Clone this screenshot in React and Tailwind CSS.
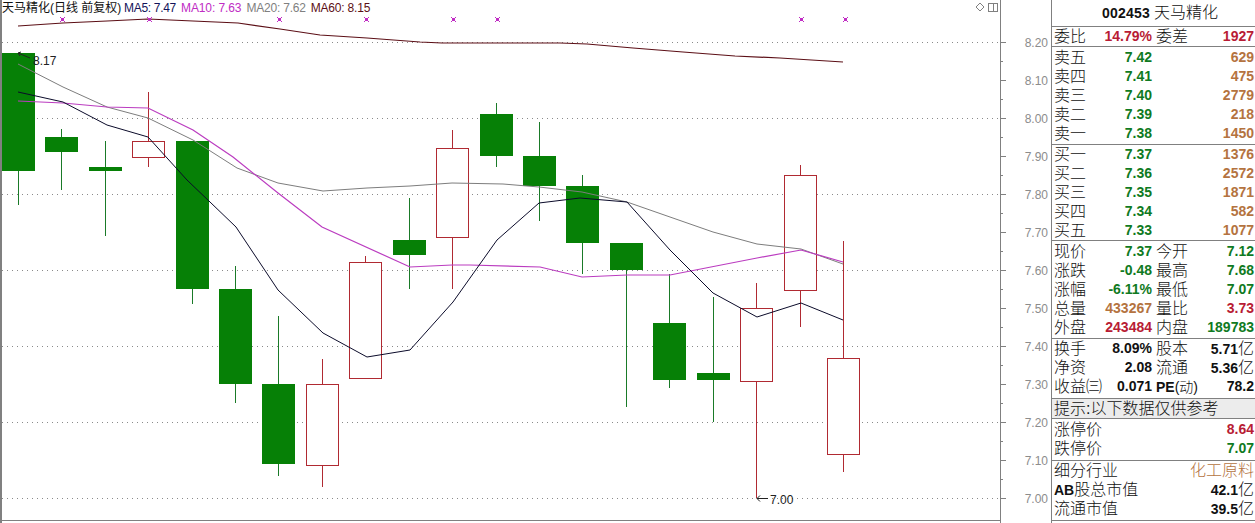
import React from "react";

const GREEN = "#0f7a22";
const RED = "#b81c34";
const BROWN = "#b4733f";

// [left, bodyTop, bodyBottom, wickTop, wickBottom, type]
const candles = [
  [2, 53, 171, 53, 205, "g"],
  [45, 137, 152, 129, 190, "g"],
  [89, 167, 171, 141, 236, "g"],
  [132, 141, 157, 92, 167, "r"],
  [176, 141, 289, 141, 304, "g"],
  [219, 289, 384, 266, 403, "g"],
  [262, 384, 464, 316, 476, "g"],
  [306, 384, 465, 359, 487, "r"],
  [349, 262, 378, 256, 378, "r"],
  [393, 240, 255, 198, 289, "g"],
  [436, 148, 237, 130, 289, "r"],
  [480, 114, 156, 103, 167, "g"],
  [523, 156, 186, 122, 221, "g"],
  [566, 186, 243, 175, 274, "g"],
  [610, 243, 270, 243, 407, "g"],
  [653, 323, 380, 274, 388, "g"],
  [697, 373, 380, 297, 422, "g"],
  [740, 308, 381, 283, 498, "r"],
  [784, 175, 290, 165, 327, "r"],
  [827, 358, 454, 241, 472, "r"],
];

const ma60 =
  "18,26 63,23 107,21 148,19 193,21 238,23 280,29 320,35 367,38 420,42 442,43 473,43 560,43 587,44 633,48 683,52 735,56 780,58 843,62";
const ma20 =
  "18,64 63,87 107,107 148,118 193,140 237,168 278,183 323,191 367,188 410,186 452,183 503,184 539,187 582,192 627,202 670,217 713,232 757,244 801,249 843,264";
const ma10 =
  "18,101 63,103 107,107 148,108 193,130 233,157 278,193 322,227 410,267 452,265 470,265 540,267 582,277 627,275 670,275 757,258 801,250 843,262";
const ma5 =
  "18,92 63,102 107,125 148,137 187,180 210,202 236,227 278,290 323,333 367,357 410,350 453,302 497,240 539,203 580,198 627,202 670,250 713,293 757,317 801,303 843,320";

const markers = [62, 149, 279, 366, 453, 497, 801, 845];
const dotted = [42, 118, 194, 270, 346, 422, 498];
const axis = ["8.20", "8.10", "8.00", "7.90", "7.80", "7.70", "7.60", "7.50", "7.40", "7.30", "7.20", "7.10", "7.00"];

const Chart = () => (
  <svg width="1051" height="523" className="block">
    {dotted.map((y) => (
      <line key={y} x1="2" x2="1000" y1={y + 0.5} y2={y + 0.5} stroke="#8a8a8a" strokeDasharray="1 4" />
    ))}

    {candles.map(([x, top, bottom, wickTop, wickBottom, type]) => {
      const color = type === "g" ? "#068006" : "#b02a32";
      const wick = type === "g" ? "#1a7a28" : "#b02a32";
      return (
        <g key={x} shapeRendering="crispEdges">
          <rect x={x + 16} y={wickTop} width="1" height={wickBottom - wickTop} fill={wick} />
          {type === "g" ? (
            <rect x={x} y={top} width="33" height={bottom - top} fill={color} />
          ) : (
            <rect x={x + 0.5} y={top + 0.5} width="32" height={bottom - top} fill="#fff" stroke={color} />
          )}
        </g>
      );
    })}

    <polyline points={ma60} fill="none" stroke="#5c0f16" strokeWidth="1.2" />
    <polyline points={ma20} fill="none" stroke="#7d7d7d" strokeWidth="1" />
    <polyline points={ma10} fill="none" stroke="#bb3cc0" strokeWidth="1.2" />
    <polyline points={ma5} fill="none" stroke="#0b0b2a" strokeWidth="1" />

    {markers.map((x) => (
      <path
        key={x}
        d={`M${x - 2} 17h1v1h-1zM${x + 2} 17h1v1h-1zM${x - 2} 21h1v1h-1zM${x + 2} 21h1v1h-1zM${x - 1} 18h3v3h-3z`}
        fill="#c02cc4"
        shapeRendering="crispEdges"
      />
    ))}

    {/* high and low price tags */}
    <path d="M30 58 18 53m3 -1 -3 1 2 3" fill="none" stroke="#222" />
    <text x="33" y="65" fontSize="12" fill="#222">8.17</text>
    <path d="M768 498.5H757m3 -3 -3 3 3 3" fill="none" stroke="#222" />
    <text x="770" y="504" fontSize="12" fill="#222">7.00</text>

    {/* layout toggle icons */}
    <path d="M980 3l4 4-4 4-4-4z" fill="none" stroke="#808080" />
    <path d="M988.500 3.500h9v8h-9zM993.500 3.500v8" fill="none" stroke="#808080" shapeRendering="crispEdges" />

    {/* price axis */}
    <g shapeRendering="crispEdges" fill="#808080">
      <rect x="0" y="0" width="2" height="523" />
      <rect x="0" y="520" width="1000" height="1" />
      <rect x="1000" y="0" width="1" height="523" />
      {axis.map((label, i) => (
        <g key={label}>
          <rect x="1000" y={42 + i * 38} width="6" height="1" />
          {i < 12 && <rect x="1000" y={61 + i * 38} width="3" height="1" />}
        </g>
      ))}
    </g>
    {axis.map((label, i) => (
      <text key={label} x="1048" y={47 + i * 38} fontSize="12" textAnchor="end" fill="#8c8c8c">
        {label}
      </text>
    ))}
  </svg>
);

const Num = ({ color = "#111", children }) => (
  <span className="text-[14px] font-bold" style={{ color }}>
    {children}
  </span>
);

const Row = ({ a, b, c, d, bColor, dColor }) => (
  <div className="grid grid-cols-[98px_1fr] h-[19px] leading-[19px] pl-[2px] pr-[2px] text-[16px] text-[#111] font-light whitespace-nowrap">
    <div className="flex justify-between">
      <span>{a}</span>
      <Num color={bColor}>{b}</Num>
    </div>
    <div className="flex justify-between pl-[4px]">
      <span>{c}</span>
      <Num color={dColor}>{d}</Num>
    </div>
  </div>
);

const Yi = ({ children }) => (
  <>
    {children}
    <span className="text-[16px] font-light">亿</span>
  </>
);

const Panel = () => (
  <div className="w-[204px] h-[523px] overflow-hidden flex flex-col text-[#111]">
    <div className="h-[27px] border-b border-[#808080] flex items-center justify-center gap-[4px] pl-[12px] text-[16px] font-light">
      <span className="text-[14px] font-bold tracking-[0.2px]">002453</span>
      <span>天马精化</span>
    </div>
    <div className="h-[20px] border-b border-[#808080]">
      <Row a="委比" b="14.79%" c="委差" d="1927" bColor={RED} dColor={RED} />
    </div>
    <div className="h-[98px] pt-[1px] border-b border-[#808080]">
      <Row a="卖五" b="7.42" d="629" bColor={GREEN} dColor={BROWN} />
      <Row a="卖四" b="7.41" d="475" bColor={GREEN} dColor={BROWN} />
      <Row a="卖三" b="7.40" d="2779" bColor={GREEN} dColor={BROWN} />
      <Row a="卖二" b="7.39" d="218" bColor={GREEN} dColor={BROWN} />
      <Row a="卖一" b="7.38" d="1450" bColor={GREEN} dColor={BROWN} />
    </div>
    <div className="h-[96px] border-b border-[#808080]">
      <Row a="买一" b="7.37" d="1376" bColor={GREEN} dColor={BROWN} />
      <Row a="买二" b="7.36" d="2572" bColor={GREEN} dColor={BROWN} />
      <Row a="买三" b="7.35" d="1871" bColor={GREEN} dColor={BROWN} />
      <Row a="买四" b="7.34" d="582" bColor={GREEN} dColor={BROWN} />
      <Row a="买五" b="7.33" d="1077" bColor={GREEN} dColor={BROWN} />
    </div>
    <div className="h-[98px] pt-[1px] border-b border-[#808080]">
      <Row a="现价" b="7.37" c="今开" d="7.12" bColor={GREEN} dColor={GREEN} />
      <Row a="涨跌" b="-0.48" c="最高" d="7.68" bColor={GREEN} dColor={GREEN} />
      <Row a="涨幅" b="-6.11%" c="最低" d="7.07" bColor={GREEN} dColor={GREEN} />
      <Row a="总量" b="433267" c="量比" d="3.73" bColor={BROWN} dColor={RED} />
      <Row a="外盘" b="243484" c="内盘" d="189783" bColor={RED} dColor={GREEN} />
    </div>
    <div className="h-[60px] border-b border-[#808080]">
      <Row a="换手" b="8.09%" c="股本" d={<Yi>5.71</Yi>} />
      <Row a="净资" b="2.08" c="流通" d={<Yi>5.36</Yi>} />
      <Row
        a="收益㈢"
        b="0.071"
        c={
          <span className="text-[14px]">
            <span className="font-bold">PE</span>(动)
          </span>
        }
        d="78.2"
      />
    </div>
    <div className="h-[20px] border-b border-[#808080] bg-[#ececec] pl-[2px] leading-[19px] text-[16px] font-light">
      提示:以下数据仅供参考
    </div>
    <div className="h-[42px] pt-[1px] border-b border-[#808080]">
      <Row a="涨停价" b="" d="8.64" dColor={RED} />
      <Row a="跌停价" b="" d="7.07" dColor={GREEN} />
    </div>
    <div className="h-[60px] border-b border-[#808080]">
      <div className="flex justify-between h-[19px] leading-[19px] pl-[2px] pr-[2px] text-[16px] font-light">
        <span>细分行业</span>
        <span style={{ color: BROWN }}>化工原料</span>
      </div>
      <Row
        a={
          <>
            <span className="text-[14px] font-bold">AB</span>股总市值
          </>
        }
        b=""
        d={<Yi>42.1</Yi>}
      />
      <Row a="流通市值" b="" d={<Yi>39.5</Yi>} />
    </div>
  </div>
);

const App = () => {
  return (
    <div className="w-[1255px] h-[523px] overflow-hidden bg-white flex font-['Liberation_Sans','Noto_Sans_CJK_SC',sans-serif]">
      <div className="relative w-[1051px] shrink-0">
        <Chart />
        <div className="absolute top-[1px] left-[2px] flex gap-[5px] text-[12px] leading-[15px] whitespace-nowrap">
          <span className="text-[#111] w-[117px]">天马精化(日线 前复权)</span>
          <span className="text-[#14145a] tracking-[-0.3px]">MA5: 7.47</span>
          <span className="text-[#c02cc4] tracking-[-0.1px]">MA10: 7.63</span>
          <span className="text-[#808080] tracking-[-0.2px]">MA20: 7.62</span>
          <span className="text-[#5c0f16] tracking-[-0.2px]">MA60: 8.15</span>
        </div>
      </div>
      <div className="border-l border-[#808080]">
        <Panel />
      </div>
    </div>
  );
};

export default App;
